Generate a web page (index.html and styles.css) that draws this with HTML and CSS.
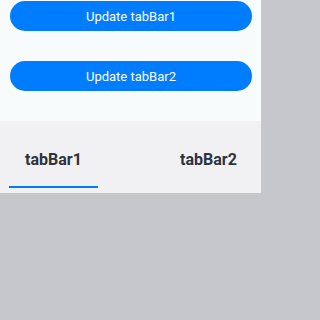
FILE: index.html
```html
<!DOCTYPE html>
<html>
<head>
<meta charset="utf-8">
<link rel="stylesheet" href="styles.css">
</head>
<body>
<div class="page">
  <div class="top">
    <button class="btn">Update tabBar1</button>
    <button class="btn">Update tabBar2</button>
  </div>
  <div class="tabbar">
    <div class="tab tab1 active"><span class="label">tabBar1</span><span class="line"></span></div>
    <div class="tab tab2"><span class="label">tabBar2</span></div>
  </div>
  <div class="content"></div>
</div>
</body>
</html>
```
FILE: styles.css
```css
html, body {
  margin: 0;
  padding: 0;
  height: 320px;
  overflow: hidden;
  background: #c5c7cd;
  font-family: Roboto, "Noto Sans", sans-serif;
}
.page {
  display: flex;
  flex-direction: column;
  width: 261px;
  height: 320px;
}
.top {
  background: #f7fbfc;
  height: 121px;
  display: flex;
  flex-direction: column;
  align-items: center;
  gap: 30px;
  padding-top: 1px;
  box-sizing: border-box;
}
.btn {
  width: 242px;
  height: 30px;
  border: none;
  border-radius: 15px;
  background: #007dff;
  color: #ffffff;
  font-family: Roboto, "Noto Sans", sans-serif;
  font-size: 13px;
  padding: 0;
  margin-left: 1px;
}
.tabbar {
  background: #f1f0f2;
  height: 72px;
  display: flex;
  flex-direction: row;
}
.tab {
  position: relative;
  display: flex;
  align-items: center;
  justify-content: center;
  padding-top: 4px;
}
.tab1 {
  width: 89px;
  margin-left: 9px;
}
.tab2 {
  width: 57px;
  margin-left: 82px;
}
.label {
  font-size: 16px;
  font-weight: 700;
  color: #2e3340;
}
.line {
  position: absolute;
  left: 0;
  right: 0;
  bottom: 5px;
  height: 2px;
  background: #007dff;
}
.content {
  flex: 1;
  background: #c5c7cd;
}
```
